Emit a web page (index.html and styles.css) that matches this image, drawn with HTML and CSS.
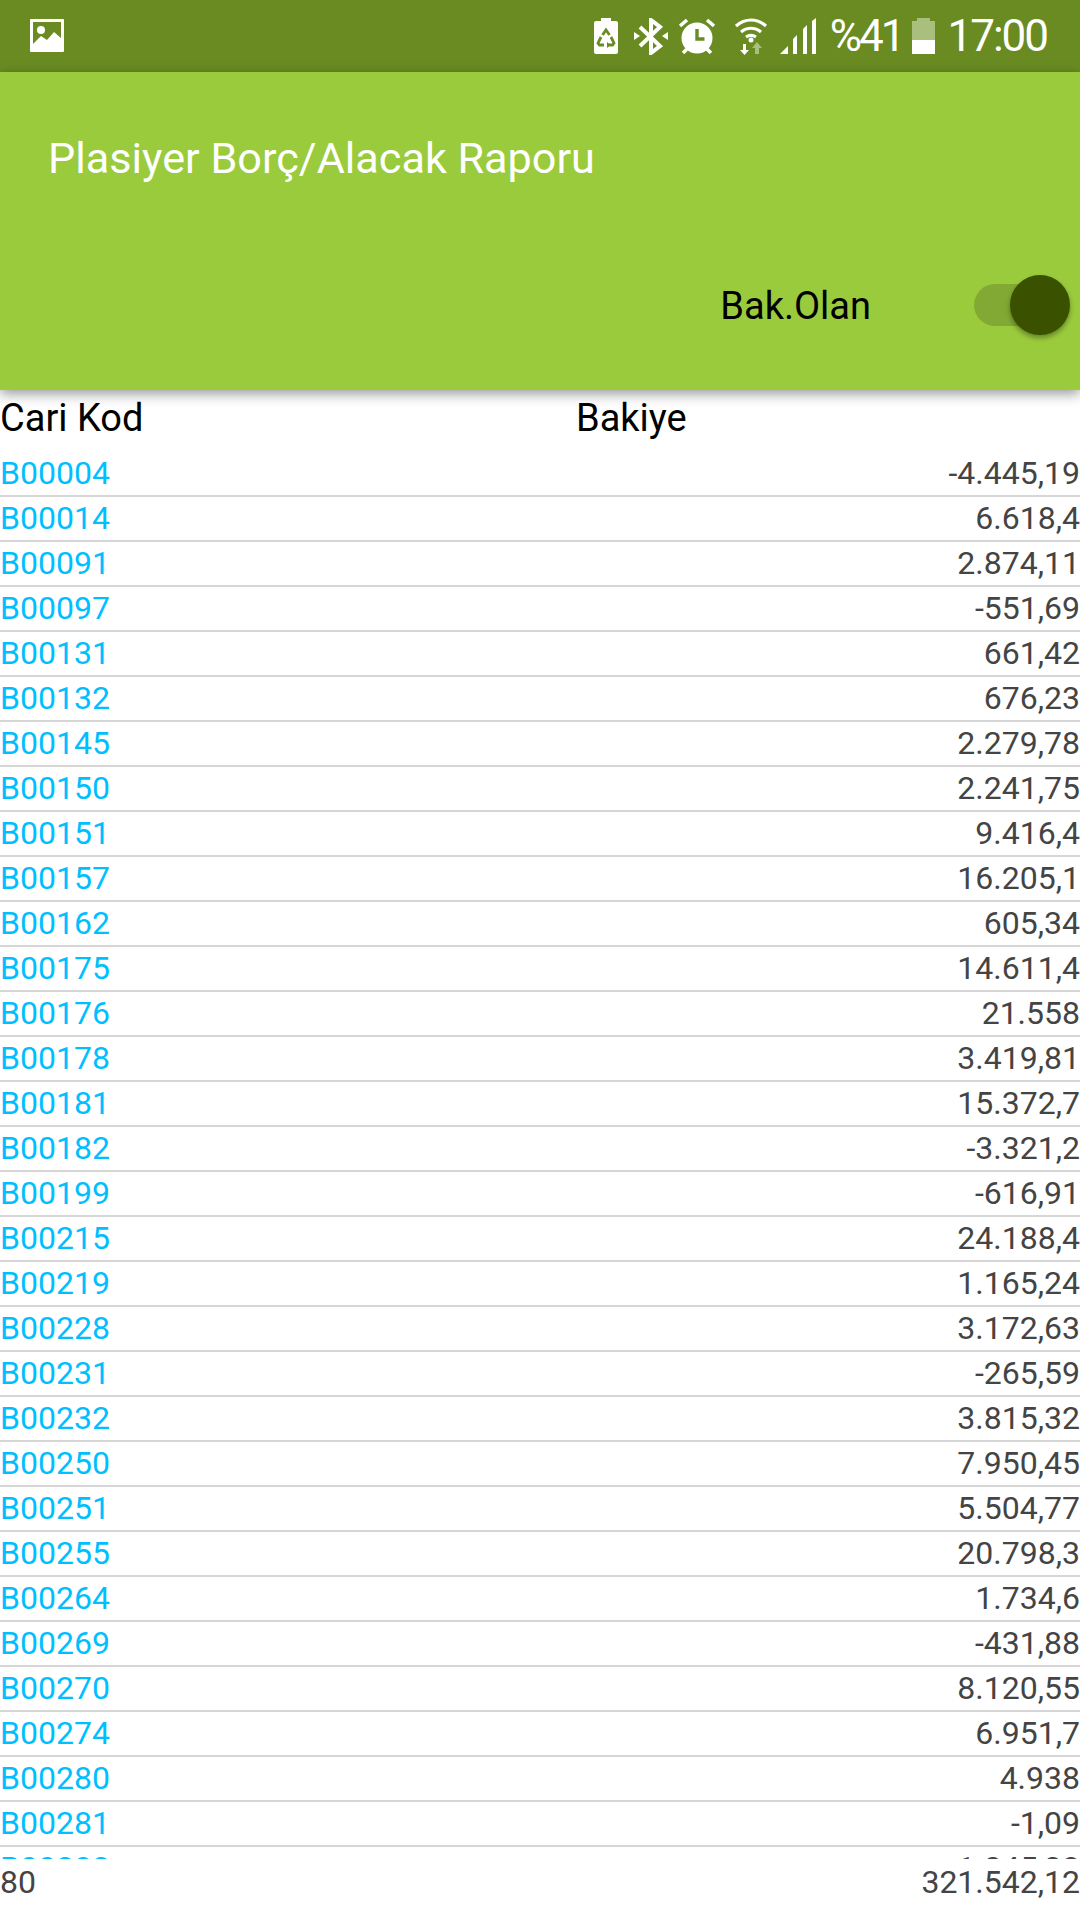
FILE: index.html
```html
<!DOCTYPE html>
<html lang="en">
<head>
    <meta charset="UTF-8">
    <meta name="viewport" content="width=device-width, initial-scale=1.0">
    <title>Plasiyer Borç/Alacak Raporu</title>
    <link rel="stylesheet" href="styles.css">
</head>
<body>
    <div class="statusBar">
        <svg class="picIcon" width="34" height="34" viewBox="0 0 34 34">
            <path fill="#fff" fill-rule="evenodd" d="M1 0h32a1 1 0 0 1 1 1v31a1 1 0 0 1-1 1H1a1 1 0 0 1-1-1V1a1 1 0 0 1 1-1zM3 3v22l8-8 6 4 7-8 7 6V3z"/>
            <circle cx="11" cy="11" r="4" fill="#fff"/>
        </svg>
        <div class="statusRight">
            <svg class="sbIcon iconBattery" width="24" height="36" viewBox="0 0 24 36">
                <path fill="#fff" d="M7 0h10v3h5a2 2 0 0 1 2 2v29a2 2 0 0 1-2 2H2a2 2 0 0 1-2-2V5a2 2 0 0 1 2-2h5z"/>
                <path fill="none" stroke="#6a8b22" stroke-width="2.800" d="M8.500 17l3.500-5 3.500 5M17 19l3 6-1.500 2H14.500M10 27H5.500L4 25l3-6"/>
                <path fill="#6a8b22" d="M13 24l3.500 3-3.500 3z"/>
            </svg>
            <svg class="sbIcon iconBt" width="34" height="37" viewBox="0 0 34 37">
                <path fill="none" stroke="#fff" stroke-width="4" d="M6 9l20 19-9 7V2l9 7L6 28"/>
                <path fill="#fff" d="M0 14l6 4-6 4zM34 14l-6 4 6 4z"/>
            </svg>
            <svg class="sbIcon iconAlarm" width="36" height="36" viewBox="0 0 36 36">
                <circle cx="18" cy="20" r="15.500" fill="#fff"/>
                <path fill="none" stroke="#6a8b22" stroke-width="3.400" d="M18 11v10h7.500"/>
                <path fill="none" stroke="#fff" stroke-width="3.500" d="M1 8l7-6M35 8l-7-6M4 35l4-4M32 35l-4-4"/>
            </svg>
            <svg class="sbIcon iconWifi" width="32" height="37" viewBox="0 0 32 37">
                <path fill="none" stroke="#fff" stroke-width="3.200" d="M1 8c9-8 21-8 30 0M6 14c6-5 14-5 20 0M11 19c3-2 7-2 10 0"/>
                <circle cx="16" cy="22" r="2.500" fill="#fff"/>
                <path fill="#fff" d="M8 26h3v6h3l-4.500 5L5 32h3z"/>
                <path fill="#a9bf7e" d="M20 30h-3l5-6 5 6h-3v6h-4z"/>
            </svg>
            <svg class="sbIcon iconSignal" width="36" height="36" viewBox="0 0 36 36">
                <path fill="#fff" d="M0 36L8 28v8zM13 36V21l4-4v19zM23 36V11l4-4v29zM32 36V3l4-3v36z"/>
            </svg>
            <span class="sbText percent">%41</span>
            <div class="battery">
                <div class="batteryCap"></div>
                <div class="batteryEmpty"></div>
                <div class="batteryFull"></div>
            </div>
            <span class="sbText clock">17:00</span>
        </div>
    </div>

    <div class="appBar">
        <div class="appTitle">Plasiyer Borç/Alacak Raporu</div>
        <div class="switchRow">
            <span class="switchLabel">Bak.Olan</span>
            <div class="switch">
                <div class="switchTrack"></div>
                <div class="switchThumb"></div>
            </div>
        </div>
    </div>

    <div class="tableHead">
        <div class="headCode">Cari Kod</div>
        <div>Bakiye</div>
    </div>

    <div class="list" id="list"></div>

    <div class="footer">
        <span>80</span>
        <span>321.542,12</span>
    </div>

    <script>
        const rows = [
            ["B00004", "-4.445,19"], ["B00014", "6.618,4"], ["B00091", "2.874,11"],
            ["B00097", "-551,69"], ["B00131", "661,42"], ["B00132", "676,23"],
            ["B00145", "2.279,78"], ["B00150", "2.241,75"], ["B00151", "9.416,4"],
            ["B00157", "16.205,1"], ["B00162", "605,34"], ["B00175", "14.611,4"],
            ["B00176", "21.558"], ["B00178", "3.419,81"], ["B00181", "15.372,7"],
            ["B00182", "-3.321,2"], ["B00199", "-616,91"], ["B00215", "24.188,4"],
            ["B00219", "1.165,24"], ["B00228", "3.172,63"], ["B00231", "-265,59"],
            ["B00232", "3.815,32"], ["B00250", "7.950,45"], ["B00251", "5.504,77"],
            ["B00255", "20.798,3"], ["B00264", "1.734,6"], ["B00269", "-431,88"],
            ["B00270", "8.120,55"], ["B00274", "6.951,7"], ["B00280", "4.938"],
            ["B00281", "-1,09"], ["B00282", "1.045,38"]
        ];
        const list = document.getElementById('list');

        rows.forEach(function (r) {
            const row = document.createElement('div');
            row.className = 'row';
            const code = document.createElement('span');
            code.className = 'code';
            code.textContent = r[0];
            const value = document.createElement('span');
            value.className = 'value';
            value.textContent = r[1];
            row.appendChild(code);
            row.appendChild(value);
            list.appendChild(row);
        });
    </script>
</body>
</html>
```

FILE: styles.css
```css
html, body {
    height: 1920px;
}

body {
    font-family: Roboto, sans-serif;
    margin: 0;
    background-color: #fff;
    overflow: hidden;
}

.statusBar {
    height: 72px;
    background-color: #6a8b22;
    display: flex;
    align-items: center;
    justify-content: space-between;
    padding: 0 33px 0 30px;
    box-sizing: border-box;
    color: #fff;
}

.statusRight {
    display: flex;
    align-items: center;
}

.sbIcon {
    display: block;
}

.iconBattery {
    margin-right: 16px;
}

.iconBt {
    margin-right: 11px;
}

.iconAlarm {
    margin-right: 20px;
}

.iconWifi {
    margin-right: 13px;
}

.iconSignal {
    margin-right: 14px;
}

.sbText {
    font-size: 44px;
    font-weight: 400;
    line-height: 72px;
}

.percent {
    letter-spacing: -3px;
    margin-right: 10px;
}

.clock {
    letter-spacing: -2px;
}

.battery {
    width: 23px;
    height: 36px;
    display: flex;
    flex-direction: column;
    margin-right: 12px;
}

.batteryCap {
    width: 13px;
    height: 3px;
    margin: 0 auto;
    background-color: #a9bf7e;
}

.batteryEmpty {
    height: 19px;
    background-color: #a9bf7e;
}

.batteryFull {
    height: 14px;
    background-color: #fff;
}

.appBar {
    height: 318px;
    background-color: #9acb3c;
    box-shadow: 0 4px 12px rgba(0, 0, 0, 0.4);
    position: relative;
    display: flex;
    flex-direction: column;
    box-sizing: border-box;
    padding: 59px 10px 0 48px;
}

.appTitle {
    font-size: 43.2px;
    line-height: 56px;
    color: #fff;
}

.switchRow {
    display: flex;
    align-items: center;
    justify-content: flex-end;
    margin-top: 88px;
}

.switchLabel {
    font-size: 38px;
    color: #000;
    margin-right: 103px;
    padding-top: 2px;
}

.switch {
    position: relative;
    width: 96px;
    height: 60px;
}

.switchTrack {
    position: absolute;
    left: 0;
    top: 9px;
    width: 84px;
    height: 42px;
    border-radius: 21px;
    background-color: #82a933;
}

.switchThumb {
    position: absolute;
    right: 0;
    top: 0;
    width: 60px;
    height: 60px;
    border-radius: 50%;
    background-color: #3a5200;
    box-shadow: 0 3px 5px rgba(0, 0, 0, 0.35);
}

.tableHead {
    display: flex;
    font-size: 38px;
    line-height: 48px;
    color: #000;
    padding-top: 4px;
    height: 48px;
    margin-bottom: 10px;
}

.headCode {
    width: 576px;
}

.list {
    height: 1407px;
    overflow: hidden;
}

.row {
    height: 45px;
    box-sizing: border-box;
    border-bottom: 2px solid #d6d6d6;
    padding-bottom: 2px;
    display: flex;
    justify-content: space-between;
    align-items: center;
    font-size: 32px;
}

.code {
    color: #00bfff;
}

.value {
    color: #444;
}

.footer {
    display: flex;
    justify-content: space-between;
    font-size: 32px;
    line-height: 44px;
    padding-top: 1px;
    color: #444;
}
```
